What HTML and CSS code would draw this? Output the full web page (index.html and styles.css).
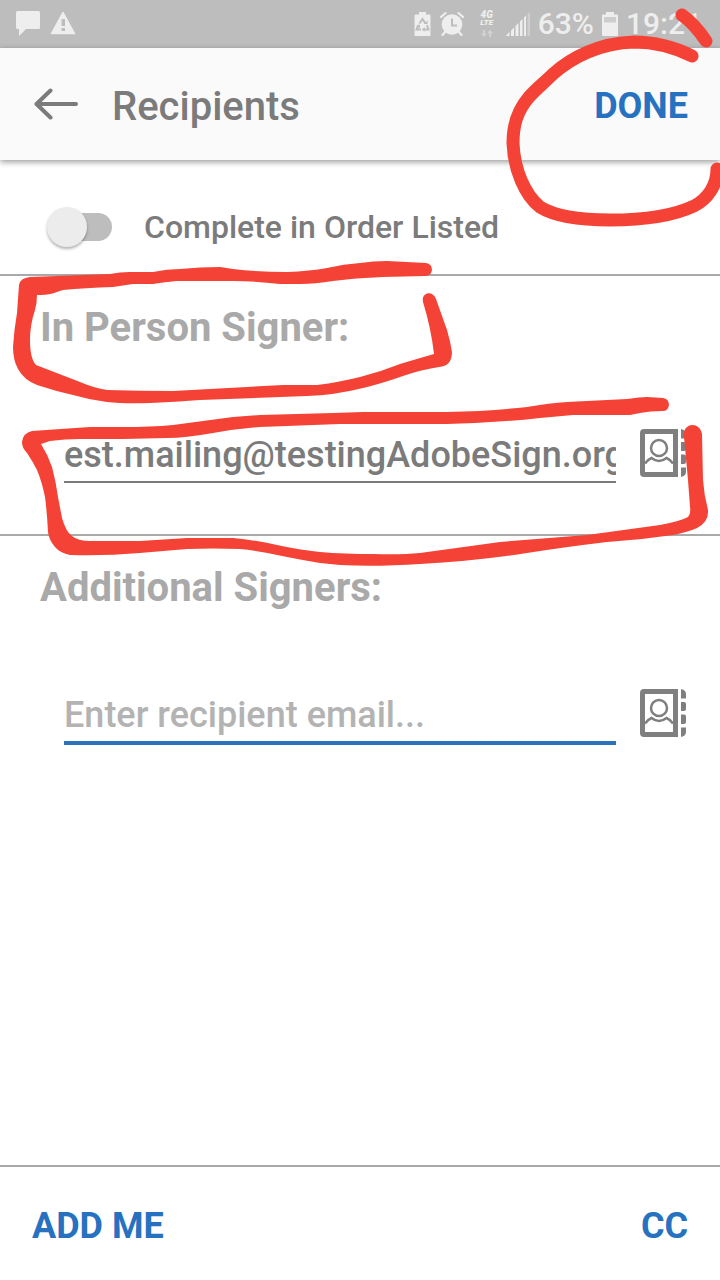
FILE: index.html
```html
<!DOCTYPE html>
<html lang="en">
<head>
    <meta charset="UTF-8">
    <meta name="viewport" content="width=device-width, initial-scale=1.0">
    <title>Recipients</title>
    <link rel="stylesheet" href="styles.css">
</head>
<body>
    <!-- Status bar -->
    <div class="status-bar">
        <div class="status-left">
            <svg width="24" height="26" viewBox="0 0 24 26" fill="#eee"><path d="M1.500 0H22.500Q24 0 24 1.500V16.500Q24 18 22.500 18H10L3 25V18H1.500Q0 18 0 16.500V1.500Q0 0 1.500 0Z"/></svg>
            <svg width="26" height="26" viewBox="0 0 26 26"><path d="M13 1.500L24.500 22.500H1.500Z" fill="#eee" stroke="#eee" stroke-width="1.500" stroke-linejoin="round"/><path d="M11.500 8h3.500v7h-3.500zM11.500 17h3.500v3h-3.500z" fill="#bdbdbd"/></svg>
        </div>
        <div class="status-right">
            <svg width="18" height="24" viewBox="0 0 18 24"><path d="M5 0h7v2.500h3.500q1 0 1 1v19.500q0 1-1 1h-14q-1 0-1-1V3.500q0-1 1-1H5z" fill="#eee"/><path d="M5.500 11.500L8.500 7L11.500 11.500M13 13L14.500 17.500H10M7 17.500H2.500L4.500 13" fill="none" stroke="#bdbdbd" stroke-width="2"/><path d="M9.500 12h4V8.500zM10.500 15v5L8 17.500zM2 14.500l4-2v3.500z" fill="#bdbdbd"/></svg>
            <svg width="24" height="24" viewBox="0 0 24 24"><circle cx="12" cy="12.500" r="10.300" fill="#eee"/><path d="M1 5L5.500 1M23 5L18.500 1M5 20L2.500 23M19 20L21.500 23" fill="none" stroke="#eee" stroke-width="2.200" stroke-linecap="round"/><path d="M12 6.500V13.500H17" fill="none" stroke="#bdbdbd" stroke-width="2"/></svg>
            <div class="network">
                <span>4G</span>
                <span class="lte">LTE</span>
                <svg width="14" height="7" viewBox="0 0 14 8" fill="#d4d4d4"><path d="M2.500 0h2v4H7L3.500 8L0 4h2.500zM9.500 8h2V4H14L10.500 0L7 4h2.500z"/></svg>
            </div>
            <svg width="24" height="24" viewBox="0 0 24 24"><path d="M0 24V23.500L3.500 20V24zM5 24V18.500L8 15.500V24zM9.500 24V14L12.500 11V24zM14 24V9.500L16.500 7V24zM18 24V5.500L20 3.500V24z" fill="#eee"/><path d="M21.500 24V2L24 0V24z" fill="#d0d0d0"/></svg>
            <span class="percent">63%</span>
            <svg width="16" height="24" viewBox="0 0 16 24"><path d="M4 0h8v2.500h3q1 0 1 1v19.500q0 1-1 1H1q-1 0-1-1V3.500q0-1 1-1h3z" fill="#eee"/><path d="M2 5h12v5.500H2z" fill="#cdcdcd"/></svg>
            <span class="time">19:21</span>
        </div>
    </div>

    <header class="header">
        <button type="button" class="back" aria-label="Back">
            <svg width="44" height="32" viewBox="0 0 44 32" fill="none" stroke="#7b7b7b" stroke-width="4" stroke-linecap="round" stroke-linejoin="round"><path d="M42 16H3M16.500 2.500L2.500 16L16.500 29.500"/></svg>
        </button>
        <h1>Recipients</h1>
        <button type="button" class="action">DONE</button>
    </header>

    <form id="recipientsForm" class="content">
        <label class="order-row">
            <input type="checkbox" class="switch" id="inOrder">
            <span>Complete in Order Listed</span>
        </label>

        <section class="signers">
            <h2><label for="inPersonEmail">In Person Signer:</label></h2>
            <div class="email-row">
                <input type="text" id="inPersonEmail" value="est.mailing@testingAdobeSign.org" spellcheck="false">
                <button type="button" class="contacts" aria-label="Choose contact">
                    <svg width="46" height="48" viewBox="0 0 46 48"><use href="#contactBook"/></svg>
                </button>
            </div>
        </section>

        <section class="signers">
            <h2><label for="additionalEmail">Additional Signers:</label></h2>
            <div class="email-row">
                <input type="text" id="additionalEmail" class="active" placeholder="Enter recipient email...">
                <button type="button" class="contacts" aria-label="Choose contact">
                    <svg width="46" height="48" viewBox="0 0 46 48">
                        <g id="contactBook">
                            <path d="M4 0H38V48H4Q0 48 0 44V4Q0 0 4 0ZM5 5V43H33V5Z" fill="#7f7f7f" fill-rule="evenodd"/>
                            <circle cx="19" cy="19" r="8" fill="none" stroke="#7f7f7f" stroke-width="2.500"/>
                            <path d="M5 34.500C7 32 9 30 11.500 29C14 31 16 32 19 32C22 32 24 31 26.500 29C29 30 31 32 33 34.500" fill="none" stroke="#7f7f7f" stroke-width="2.500"/>
                            <path d="M41 0Q46 1 46 5V9.500H41ZM41 13H44Q46 13 46 15V20Q46 22 44 22H41ZM41 25.500H44Q46 25.500 46 27.500V33Q46 35 44 35H41ZM41 38.500H46V43Q46 47 41 48Z" fill="#7f7f7f"/>
                        </g>
                    </svg>
                </button>
            </div>
        </section>
    </form>

    <footer class="footer">
        <button type="button" class="action">ADD ME</button>
        <button type="button" class="action">CC</button>
    </footer>

    <!-- Hand-drawn marks over the page -->
    <svg class="marks" viewBox="0 0 720 1280" preserveAspectRatio="none" aria-hidden="true">
        <g fill="none" stroke="#f44336" stroke-width="13" stroke-linecap="round">
            <path d="M692 56C672 46 650 42 634 42C600 43 572 57 553 74C545 82 536 89 529 97C516 112 513 127 513 143C514 170 525 195 540 207C556 217 580 220 610 220C645 220 675 215 694 206C708 199 717 185 717 169"/>
            <path d="M682 15C692 22 700 32 706 41"/>
        </g>
        <g fill="#f44336">
            <path d="M19 285Q20 278 30 277L110 274Q120 272 130 272H153Q167 269 180 269Q200 267 220 267L233 269Q260 272 287 272Q310 271 327 268Q344 264 360 263Q373 261 387 261L426 263Q432 264 432 270Q431 276 425 276L383 277Q355 278 333 281Q315 284 300 284H280Q255 281 233 281H177Q165 282 153 284H133L113 287Q85 288 63 290C54 293 50 295 37 295Q37 303 35 310Q30 325 30 340C30 352 32 361 36 365L80 382Q94 388 107 390Q140 391 173 391L283 385H317Q340 382 360 377Q380 372 400 364Q420 358 434 354Q431 328 423 302C421 292 433 290 436 299L447 330Q450 340 452 352Q452 366 439 367Q420 370 403 376Q380 384 363 388Q335 395 307 396L200 400Q175 402 150 403Q125 404 107 402Q90 400 73 395Q55 391 37 385Q24 380 18 369Q13 360 13 347Q14 330 17 313Z"/>
            <path d="M22 442Q23 433 32 431Q60 429 90 427H123Q150 427 173 425L233 417L260 415L333 413L363 412H447Q490 411 527 407Q550 403 567 402L627 399Q640 397 647 397L663 398Q669 399 669 405Q668 411 663 411Q650 411 640 413L630 415H573L540 418Q495 423 447 424H340L287 426L260 427Q235 429 213 433Q185 438 167 438L123 439H80Q65 439 50 441L41 444Q48 455 52 467Q56 482 58 497L62 518Q66 532 72 536Q78 541 90 541H140L187 538H233Q255 540 277 545Q300 550 320 552Q345 554 373 554Q400 555 420 553L500 542L587 535L660 525Q681 521 688 517Q691 514 690 507L688 480L684 437C682 422 700 421 702 434L703 480Q704 495 708 510Q709 522 697 528Q688 532 673 535Q640 540 607 542Q565 547 527 553Q475 561 420 564Q375 567 340 565L320 563Q302 560 287 557Q262 551 240 549Q212 548 187 549L140 553Q105 556 70 555Q60 553 55 547Q49 540 48 532Q47 512 45 497Q42 482 37 470Q33 462 27 453Q22 448 22 442Z"/>
        </g>
    </svg>
</body>
</html>
```
FILE: styles.css
```css
* {
    box-sizing: border-box;
}

body {
    position: relative;
    display: flex;
    flex-direction: column;
    min-height: 100vh;
    margin: 0;
    background-color: #fff;
    color: #7b7b7b;
    font-family: Roboto, sans-serif;
    overflow-x: hidden;
}

h1, h2 {
    margin: 0;
}

button {
    padding: 0;
    border: none;
    background: none;
    font-family: inherit;
    cursor: pointer;
}

svg {
    display: block;
    flex-shrink: 0;
}

.status-bar {
    display: flex;
    justify-content: space-between;
    align-items: center;
    height: 48px;
    padding: 0 18px 0 16px;
    background-color: #bdbdbd;
    color: #eee;
    font-size: 30px;
}

.status-left {
    display: flex;
    align-items: center;
    gap: 10px;
}

.status-right {
    display: flex;
    align-items: center;
    gap: 8px;
}

.percent, .time {
    font-weight: 500;
    line-height: 48px;
}

.network {
    display: flex;
    flex-direction: column;
    align-items: center;
    margin: 0 4px 0 8px;
    font-size: 10px;
    font-style: italic;
    font-weight: 900;
    line-height: 8px;
}

.network svg {
    margin-top: 3px;
}

.lte {
    font-size: 8px;
}

.header {
    display: flex;
    align-items: center;
    height: 112px;
    padding: 0 32px 0 34px;
    background-color: #fafafa;
    box-shadow: 0 2px 6px rgba(0, 0, 0, 0.4);
}

.header h1 {
    flex: 1;
    margin-left: 34px;
    padding-top: 4px;
    font-size: 40px;
    font-weight: 500;
}

.action {
    color: #2672c0;
    font-size: 36px;
    font-weight: 700;
}

.header .action {
    padding-top: 4px;
}

.content {
    flex: 1;
}

.order-row {
    display: flex;
    align-items: center;
    gap: 32px;
    height: 114px;
    padding: 20px 32px 0 56px;
    font-size: 32px;
    font-weight: 500;
}

.switch {
    appearance: none;
    width: 56px;
    height: 28px;
    margin: 0;
    border-radius: 14px;
    background-color: #bdbdbd;
}

.switch::before {
    content: "";
    display: block;
    width: 40px;
    height: 40px;
    margin: -6px 0 0 -9px;
    border-radius: 50%;
    background-color: #ececec;
    box-shadow: 0 2px 3px rgba(0, 0, 0, 0.3);
}

.switch:checked::before {
    margin-left: 25px;
}

.signers {
    padding: 28px 34px 51px 40px;
    border-top: 2px solid #a9a9a9;
}

.signers h2 {
    color: #a9a9a9;
    font-size: 40px;
    font-weight: 700;
    line-height: 48px;
}

.email-row {
    display: flex;
    align-items: flex-start;
    gap: 24px;
    margin: 77px 0 0 24px;
}

.email-row input {
    flex: 1;
    min-width: 0;
    height: 54px;
    padding: 4px 0;
    border: none;
    border-bottom: 2px solid #7b7b7b;
    border-radius: 0;
    background: none;
    color: #7b7b7b;
    font-family: inherit;
    font-size: 36px;
    font-weight: 500;
    outline: none;
}

.email-row input::placeholder {
    color: #b3b3b3;
}

.email-row input:focus, .email-row input.active {
    height: 56px;
    border-bottom: 4px solid #2b72bd;
}

.footer {
    display: flex;
    justify-content: space-between;
    align-items: center;
    height: 115px;
    padding: 4px 32px 0;
    border-top: 2px solid #a9a9a9;
}

.marks {
    position: absolute;
    top: 0;
    left: 0;
    width: 100%;
    height: 100%;
    pointer-events: none;
}
```
